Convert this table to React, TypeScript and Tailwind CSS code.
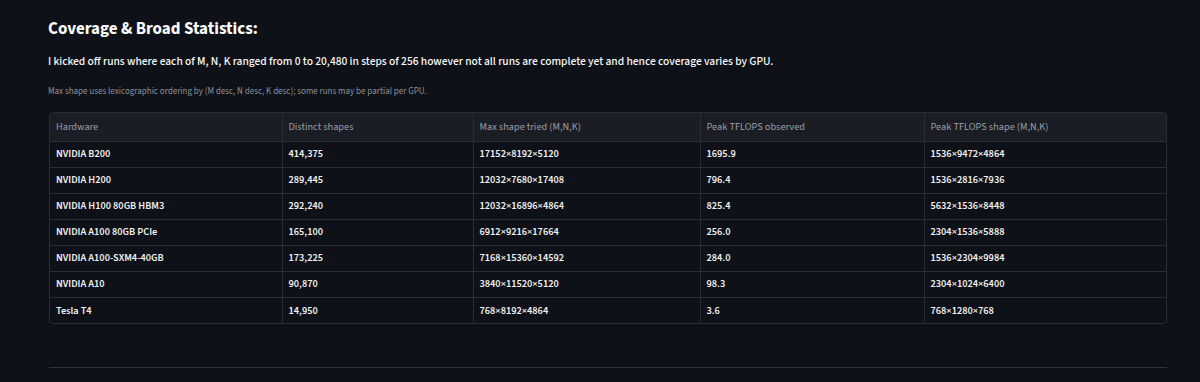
import React from "react";

const rows = [
  ["NVIDIA B200", "414,375", "17152×8192×5120", "1695.9", "1536×9472×4864"],
  ["NVIDIA H200", "289,445", "12032×7680×17408", "796.4", "1536×2816×7936"],
  ["NVIDIA H100 80GB HBM3", "292,240", "12032×16896×4864", "825.4", "5632×1536×8448"],
  ["NVIDIA A100 80GB PCIe", "165,100", "6912×9216×17664", "256.0", "2304×1536×5888"],
  ["NVIDIA A100-SXM4-40GB", "173,225", "7168×15360×14592", "284.0", "1536×2304×9984"],
  ["NVIDIA A10", "90,870", "3840×11520×5120", "98.3", "2304×1024×6400"],
  ["Tesla T4", "14,950", "768×8192×4864", "3.6", "768×1280×768"],
];

const headers = [
  "Hardware",
  "Distinct shapes",
  "Max shape tried (M,N,K)",
  "Peak TFLOPS observed",
  "Peak TFLOPS shape (M,N,K)",
];

const widths = ["w-[232px]", "w-[191px]", "w-[227px]", "w-[224px]", "w-[244px]"];

export default function App() {
  return (
    <div className="w-[1200px] h-[382px] bg-[#0e1117] text-[#fafafa] overflow-hidden font-['Source_Sans_3','Lato',sans-serif]">
      <div className="pl-[48px] pr-[33px] pt-[16px]">
        <h1 className="text-[17px] leading-[26px] font-bold text-[#fafafa]">
          Coverage &amp; Broad Statistics:
        </h1>
        <p className="mt-[12px] text-[11.5px] leading-[16px] font-medium text-[#fafafa]">
          I kicked off runs where each of M, N, K ranged from 0 to 20,480 in steps of 256 however not all runs are complete yet and hence coverage varies by GPU.
        </p>
        <p className="mt-[15px] text-[9px] leading-[14px] text-[#8d9099]">
          Max shape uses lexicographic ordering by (M desc, N desc, K desc); some runs may be partial per GPU.
        </p>
        <div className="mt-[13px] ml-[1px] w-[1118px] border border-[#2a2d35] rounded-[4px] overflow-hidden">
          <table className="w-full border-collapse table-fixed">
            <thead>
              <tr className="bg-[#1a1d24] h-[28px]">
                {headers.map((h, i) => (
                  <th
                    key={h}
                    className={`${widths[i]} text-left font-normal text-[10.3px] text-[#9a9ea6] px-[6px] border-b border-[#2a2d35] ${i > 0 ? "border-l" : ""}`}
                  >
                    {h}
                  </th>
                ))}
              </tr>
            </thead>
            <tbody>
              {rows.map((r, ri) => (
                <tr key={ri} className="h-[26px]">
                  {r.map((c, ci) => (
                    <td
                      key={ci}
                      className={`text-[10.3px] font-semibold text-[#f2f2f2] px-[6px] border-[#2a2d35] ${ri < rows.length - 1 ? "border-b" : ""} ${ci > 0 ? "border-l" : ""}`}
                    >
                      {c}
                    </td>
                  ))}
                </tr>
              ))}
            </tbody>
          </table>
        </div>
        <div className="mt-[43px] ml-[1px] w-[1118px] h-px bg-[#2f323a]" />
      </div>
    </div>
  );
}
